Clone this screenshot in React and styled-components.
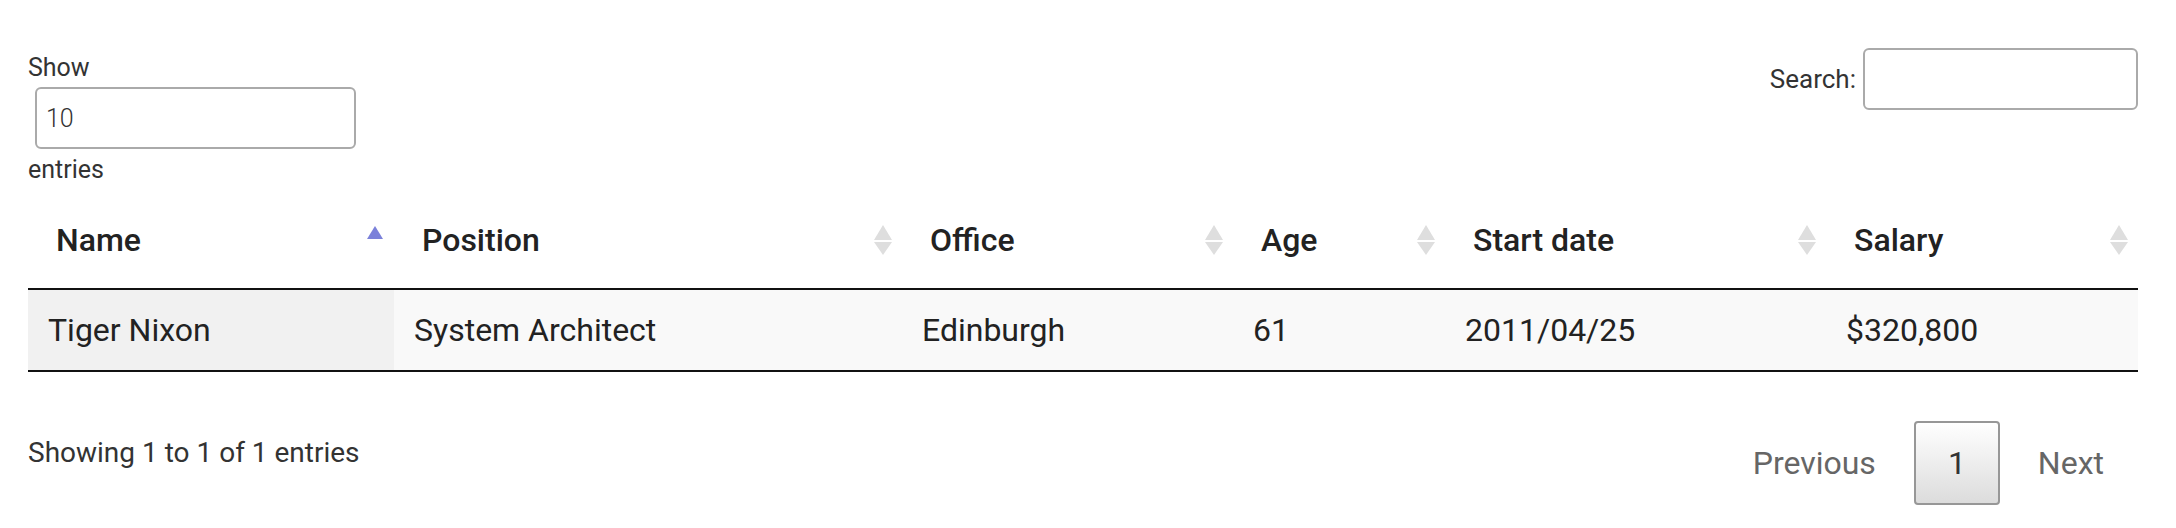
import React, { useState } from "react";
import styled, { createGlobalStyle } from "styled-components";

const columns = [
  { key: "name", title: "Name", width: 366 },
  { key: "position", title: "Position", width: 508 },
  { key: "office", title: "Office", width: 331 },
  { key: "age", title: "Age", width: 212 },
  { key: "start", title: "Start date", width: 381 },
  { key: "salary", title: "Salary", width: 312 },
];

const rows = [
  {
    name: "Tiger Nixon",
    position: "System Architect",
    office: "Edinburgh",
    age: "61",
    start: "2011/04/25",
    salary: "$320,800",
  },
];

const SortIcon = ({ active }) => (
  <svg width="18" height="32" viewBox="0 0 18 32">
    {active ? (
      <polygon points="9,2 17,15 1,15" fill="#7b81da" />
    ) : (
      <>
        <polygon points="9,1 18,16 0,16" fill="#dedede" />
        <polygon points="0,18 18,18 9,31" fill="#dedede" />
      </>
    )}
  </svg>
);

const App = () => {
  const [length, setLength] = useState("10");
  const [search, setSearch] = useState("");

  return (
    <Page>
      <GlobalStyle />
      <TopBar>
        <LengthLabel>
          <LabelText>Show</LabelText>
          <LengthSelect
            value={length}
            onChange={(event) => setLength(event.target.value)}
          >
            <option value="10">10</option>
            <option value="25">25</option>
            <option value="50">50</option>
            <option value="100">100</option>
          </LengthSelect>
          <LabelText>entries</LabelText>
        </LengthLabel>
        <SearchLabel>
          <LabelText $wide>Search:</LabelText>
          <SearchInput
            type="search"
            value={search}
            onChange={(event) => setSearch(event.target.value)}
          />
        </SearchLabel>
      </TopBar>

      <Table>
        <colgroup>
          {columns.map((col) => (
            <col key={col.key} style={{ width: col.width }} />
          ))}
        </colgroup>
        <thead>
          <tr>
            {columns.map((col, i) => (
              <Th key={col.key}>
                <ThInner>
                  <span>{col.title}</span>
                  <SortIcon active={i === 0} />
                </ThInner>
              </Th>
            ))}
          </tr>
        </thead>
        <tbody>
          {rows.map((row) => (
            <tr key={row.name}>
              {columns.map((col, i) => (
                <Td key={col.key} $sorted={i === 0}>
                  {row[col.key]}
                </Td>
              ))}
            </tr>
          ))}
        </tbody>
      </Table>

      <Footer>
        <Info>Showing 1 to 1 of 1 entries</Info>
        <Paging>
          <PageButton $disabled>Previous</PageButton>
          <PageButton $current>1</PageButton>
          <PageButton $disabled>Next</PageButton>
        </Paging>
      </Footer>
    </Page>
  );
};

export default App;

const GlobalStyle = createGlobalStyle`
  body {
    margin: 0;
    background: #fff;
    font-family: Roboto, "Liberation Sans", sans-serif;
    color: #333;
  }
`;

const Page = styled.div`
  width: 2110px;
  padding: 48px 38px 0 28px;
`;

const TopBar = styled.div`
  display: flex;
  justify-content: space-between;
  align-items: flex-start;
`;

const LengthLabel = styled.label`
  display: flex;
  flex-direction: column;
  align-items: flex-start;
  margin-top: 6px;
`;

const LabelText = styled.span`
  font-size: ${(props) => (props.$wide ? "26px" : "25px")};
  line-height: 28px;
  color: #333;
`;

const LengthSelect = styled.select`
  appearance: none;
  box-sizing: border-box;
  width: 321px;
  height: 62px;
  margin: 5px 0 7px 7px;
  padding: 0 9px;
  border: 2px solid #aaa;
  border-radius: 6px;
  background: #fff;
  font-family: Roboto, "Liberation Sans", sans-serif;
  font-size: 25px;
  font-weight: 300;
  color: #333;
  outline: none;
`;

const SearchLabel = styled.label`
  display: flex;
  align-items: center;
  gap: 7px;
`;

const SearchInput = styled.input`
  box-sizing: border-box;
  width: 275px;
  height: 62px;
  padding: 0 10px;
  border: 2px solid #aaa;
  border-radius: 6px;
  background: #fff;
  font-size: 25px;
  outline: none;
`;

const Table = styled.table`
  width: 2110px;
  margin-top: 14px;
  table-layout: fixed;
  border-collapse: separate;
  border-spacing: 0;
  border-bottom: 2px solid #111;
  color: #222;
`;

const Th = styled.th`
  padding: 18px 10px 24px 28px;
  border-bottom: 2px solid #111;
  text-align: left;
  font-size: 32px;
  font-weight: 500;
  line-height: 48px;
`;

const ThInner = styled.div`
  display: flex;
  align-items: center;
  justify-content: space-between;
`;

const Td = styled.td`
  padding: 16px 20px;
  font-size: 32px;
  line-height: 48px;
  background: ${(props) => (props.$sorted ? "#f1f1f1" : "#f9f9f9")};
`;

const Footer = styled.div`
  display: flex;
  justify-content: space-between;
  align-items: flex-start;
  margin-top: 49px;
`;

const Info = styled.div`
  padding-top: 12px;
  font-size: 28px;
  line-height: 40px;
  color: #333;
`;

const Paging = styled.div`
  display: flex;
  gap: 4px;
`;

const PageButton = styled.a`
  box-sizing: border-box;
  min-width: 48px;
  padding: 16px 32px;
  border: 2px solid
    ${(props) => (props.$current ? "#979797" : "transparent")};
  border-radius: 4px;
  font-size: 32px;
  line-height: 48px;
  text-align: center;
  color: ${(props) => (props.$disabled ? "#666" : "#333")};
  background: ${(props) =>
    props.$current ? "linear-gradient(to bottom, #fff 0%, #dcdcdc 100%)" : "transparent"};
  cursor: ${(props) => (props.$disabled ? "default" : "pointer")};
`;
